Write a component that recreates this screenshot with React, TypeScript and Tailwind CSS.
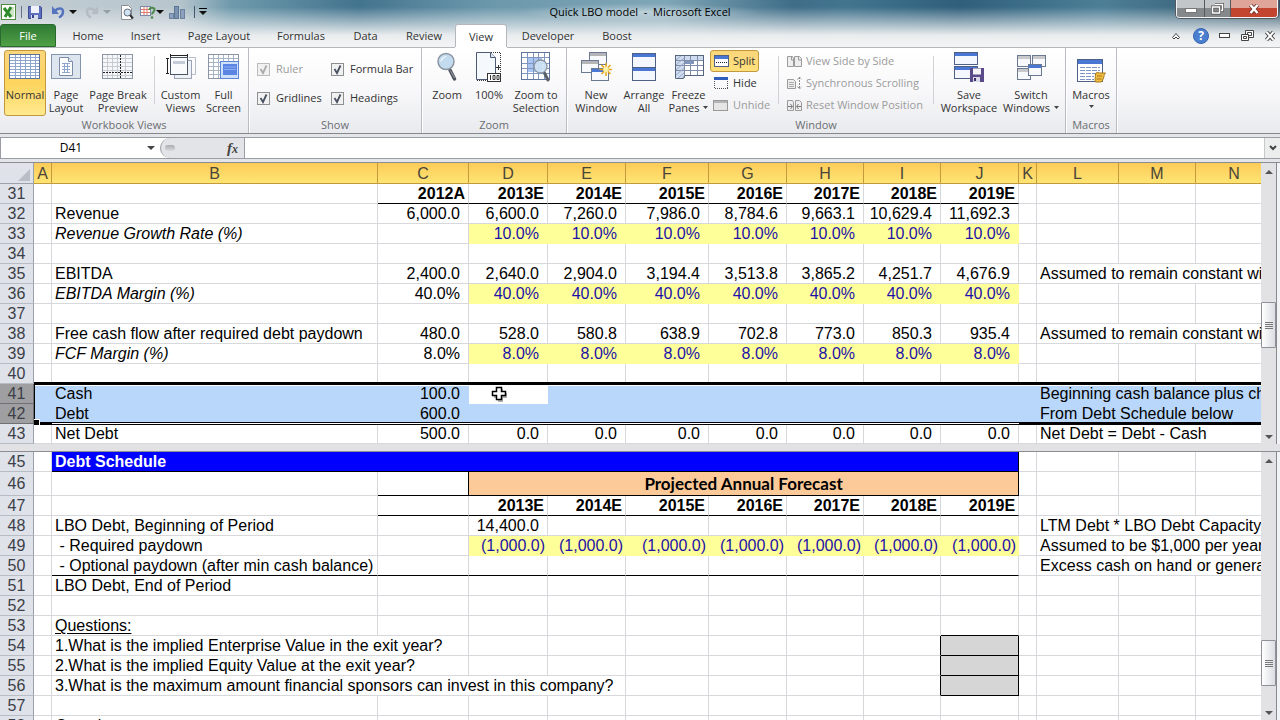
import type { ReactNode } from "react";
import { clsx } from "clsx";

/* ---------- icons ---------- */

const blue = "#4a76d4";
const slate = "#6b7891";

function Svg({ w = 32, h = 32, children }: { w?: number; h?: number; children: ReactNode }) {
  return (
    <svg width={w} height={h} viewBox={`0 0 ${w} ${h}`} fill="none" aria-hidden="true" className="shrink-0">
      {children}
    </svg>
  );
}

const NormalIcon = () => (
  <Svg>
    <rect x="0.5" y="3.5" width="30" height="24" fill="#fff" stroke="#5d7296" />
    <path d="M1 6.5h29M1 9.5h29M1 12.5h29M1 15.5h29M1 18.5h29M1 21.5h29M1 24.5h29M6.5 4v23M11.5 4v23M16.5 4v23M21.5 4v23M26.5 4v23" stroke="#8fa6cc" />
    <rect x="0.5" y="3.5" width="30" height="24" stroke="#5d7296" />
  </Svg>
);
const PageLayoutIcon = () => (
  <Svg>
    <rect x="1.5" y="3.5" width="29" height="24" fill="#dde5ef" stroke="#8494ae" />
    <path d="M9.5 6.500h9l4 4v14h-13z" fill="#fff" stroke="#7d8ca6" />
    <path d="M18.5 6.500v4h4" fill="#e4ecf7" stroke="#7d8ca6" />
    <path d="M12 12.500h8M12 15.500h8M12 18.500h8M12 21.500h8M14.500 12v10M17.500 12v10" stroke="#8fa6cc" />
  </Svg>
);
const PageBreakIcon = () => (
  <Svg>
    <rect x="0.500" y="3.500" width="30" height="24" fill="#f6f7f9" stroke="#8c95a5" />
    <path d="M1 7.500h29M1 11.500h29M1 15.500h29M1 19.500h29M1 24.500h29M5.500 4v23M10.500 4v23M15.500 4v23M23.500 4v23" stroke="#c5cad3" />
    <path d="M18.500 4v23M1 21.500h29" stroke="#222" strokeDasharray="2 1" />
  </Svg>
);
const CustomViewsIcon = () => (
  <Svg>
    <rect x="9.500" y="9.500" width="17" height="18" fill="#eef1f6" stroke="#9aa4b5" />
    <path d="M24 6.500h6.500v17H27" stroke="#b4bcc9" />
    <rect x="5.500" y="6.500" width="17" height="17" fill="#f9fafc" stroke="#4a5568" />
    <rect x="8" y="10" width="12" height="3" fill="#c3cbd9" />
    <path d="M5 4.500h18M5.500 3v3M22.500 3v3M2.500 7v16M1 7.500h3M1 22.500h3" stroke="#222" />
  </Svg>
);
const FullScreenIcon = () => (
  <Svg>
    <rect x="0.500" y="3.500" width="30" height="24" fill="#fff" stroke="#8c95a5" />
    <path d="M1 7.500h29M1 11.500h29M1 15.500h29M1 19.500h29M1 23.500h29M5.500 4v23M10.500 4v23M15.500 4v23M20.500 4v23M25.500 4v23" stroke="#a9b3c5" />
    <rect x="12.500" y="10.500" width="18" height="17" fill="#cfe0fa" stroke="#5d86d6" />
    <rect x="15" y="13" width="14" height="11" fill="#5b85e2" />
    <path d="M16 16h12M16 18.500h12" stroke="#8fb0f3" />
  </Svg>
);
const MagnifierIcon = () => (
  <Svg>
    <path d="M19 19l4.500 9" stroke="#4f545d" strokeWidth="3.500" strokeLinecap="round" />
    <path d="M19.500 19.500l4 7.500" stroke="#9aa0aa" strokeWidth="1" />
    <circle cx="15" cy="10.500" r="8" fill="#c3dbee" stroke="#8b95a1" strokeWidth="1.500" />
    <path d="M9.500 11.500a6 6 0 0 1 7-6.500c-3 1-5 3-7 6.500z" fill="#f3faff" />
  </Svg>
);
const HundredIcon = () => (
  <Svg>
    <path d="M18 1.500h9.500v28H4" stroke="#333" strokeDasharray="1 1" />
    <path d="M3.500 1.500h14l5 5v22h-19z" fill="#f5f8fd" stroke="#4e5b75" />
    <path d="M17.500 1.500v5h5" fill="#dfe7f3" stroke="#4e5b75" />
    <path d="M25.500 14v5M23 16.500h5" stroke="#333" />
    <rect x="14.500" y="22.500" width="13" height="8" fill="#fff" stroke="#333" />
    <path d="M17.500 24v5M20 24.500h2v4h-2zM24 24.500h2v4h-2z" stroke="#333" />
  </Svg>
);
const ZoomSelectionIcon = () => (
  <Svg>
    <rect x="1.500" y="1.500" width="28" height="27" fill="#fff" stroke="#62759a" />
    <rect x="8" y="7" width="14" height="14" fill="#a9c6f3" />
    <path d="M2 6.500h27M2 12.500h27M2 17.500h27M2 22.500h27M7.500 2v26M13.500 2v26M18.500 2v26M24.500 2v26" stroke="#7f96c0" />
    <path d="M24.500 22l3.500 7" stroke="#5b5f68" strokeWidth="3" strokeLinecap="round" />
    <circle cx="20.500" cy="15.500" r="6.500" fill="#cfe3f4" fillOpacity=".9" stroke="#8b95a1" strokeWidth="1.300" />
  </Svg>
);

function MiniWindow({ x, y, w, h, bar = "#b5b5b8" }: { x: number; y: number; w: number; h: number; bar?: string }) {
  return (
    <g>
      <rect x={x + 0.5} y={y + 0.5} width={w - 1} height={h - 1} fill="#f7f9fc" stroke={slate} />
      <rect x={x + 1} y={y + 1} width={w - 2} height="3" fill={bar} />
    </g>
  );
}

const NewWindowIcon = () => (
  <Svg>
    <MiniWindow x={9} y={1} w={18} h={13} />
    <MiniWindow x={1} y={9} w={18} h={13} />
    <MiniWindow x={11} y={17} w={18} h={13} bar={blue} />
    <path d="M26 12v13M19.500 18.500h13M21.500 14l9 9M30.500 14l-9 9" stroke="#e8a512" strokeWidth="1.500" />
    <circle cx="26" cy="18.500" r="2.800" fill="#fff3a8" />
  </Svg>
);
const ArrangeIcon = () => (
  <Svg>
    <rect x="4.500" y="2.500" width="23" height="14" fill="#f4f8fe" stroke="#4f6087" />
    <rect x="5" y="3" width="22" height="3" fill={blue} />
    <rect x="4.500" y="16.500" width="23" height="13" fill="#f4f8fe" stroke="#4f6087" />
    <rect x="5" y="17" width="22" height="3" fill={blue} />
  </Svg>
);
const FreezeIcon = () => (
  <Svg>
    <rect x="2.500" y="4.500" width="28" height="20" fill="#fff" stroke="#56657f" />
    <path d="M3 5h27v4H11v18H3z" fill="#cfdcef" />
    <path d="M3 9.500h27M3 14.500h27M3 19.500h27M11.500 5v22M17.500 5v19M24.500 5v19" stroke="#7f8da8" />
    <path d="M2.500 4.500v23h8l1-3" stroke="#56657f" />
    <path d="M3 9l5-4M3 14l8-7M3 19l8-7M3 24l8-7M5 27l6-5" stroke="#9aaac6" />
    <rect x="12" y="10" width="9" height="3" fill="#8296bd" />
  </Svg>
);
const SplitIcon = () => (
  <Svg w={16} h={16}>
    <rect x="1.500" y="2.500" width="14" height="11" fill="#fff" stroke="#4f6087" />
    <rect x="2" y="3" width="13" height="3" fill={blue} />
    <path d="M3 9.500h11" stroke="#222" strokeDasharray="1 1" />
  </Svg>
);
const HideIcon = () => (
  <Svg w={16} h={16}>
    <rect x="1" y="2" width="14" height="3" fill="#2f5dbd" />
    <path d="M1.500 6v8M14.500 6v8M2 13.500h13" stroke="#555" strokeDasharray="1 1" />
  </Svg>
);
const UnhideIcon = () => (
  <Svg w={16} h={16}>
    <rect x="0.500" y="3.500" width="14" height="10" fill="#e6e6e6" stroke="#999" />
    <rect x="1" y="4" width="13" height="2" fill="#b5b5b5" />
  </Svg>
);
const SideIcon = () => (
  <Svg w={16} h={16}>
    <path d="M1.500 3.500h5l1 2v8h-6zM8.500 3.500h5l2 2v8h-7z" fill="#eee" stroke="#9a9a9a" />
    <path d="M5.500 4v3h2M12.500 4v3h3" stroke="#9a9a9a" />
  </Svg>
);
const SyncIcon = () => (
  <Svg w={16} h={16}>
    <path d="M1.500 4.500h6l2 2v7h-8z" fill="#eee" stroke="#9a9a9a" />
    <path d="M3 7.500h5M3 9.500h5M3 11.500h5" stroke="#aaa" />
    <path d="M13.500 2v12M11.500 4.500l2-2.500 2 2.500M11.500 11.500l2 2.500 2-2.500" stroke="#8a8a8a" strokeDasharray="2 1" />
  </Svg>
);
const ResetIcon = () => (
  <Svg w={16} h={16}>
    <path d="M1.500 3.500h5l1 2v8h-6zM9.500 3.500h4l2 2v8h-6z" fill="#eee" stroke="#9a9a9a" />
    <path d="M2 9.500h4M4.500 7l2 2.500-2 2.500M15 9.500h-4M12.500 7l-2 2.500 2 2.500" stroke="#7a7a7a" />
  </Svg>
);
const SaveWorkspaceIcon = () => (
  <Svg>
    <rect x="1.500" y="1.500" width="23" height="12" fill="#f4f8fe" stroke="#4f6087" />
    <rect x="2" y="2" width="22" height="3" fill={blue} />
    <rect x="1.500" y="15.500" width="23" height="12" fill="#f4f8fe" stroke="#4f6087" />
    <rect x="2" y="16" width="22" height="3" fill={blue} />
    <rect x="17" y="17" width="14" height="14" fill="#5b4a8a" />
    <rect x="20" y="17.500" width="8" height="6" fill="#f3f3f8" />
    <rect x="20" y="26" width="7" height="5" fill="#d9d8e6" />
    <rect x="21" y="27" width="2" height="3" fill="#3d2f66" />
  </Svg>
);
const SwitchIcon = () => (
  <Svg>
    <MiniWindow x={2} y={4} w={14} h={12} bar="#c9c9cc" />
    <MiniWindow x={17} y={4} w={14} h={12} bar="#c9c9cc" />
    <MiniWindow x={2} y={17} w={14} h={12} bar="#c9c9cc" />
    <MiniWindow x={13} y={13} w={14} h={12} bar={blue} />
  </Svg>
);
const MacrosIcon = () => (
  <Svg>
    <rect x="2.500" y="8.500" width="25" height="22" fill="#fff" stroke="#4f6087" />
    <rect x="3" y="9" width="24" height="4" fill={blue} />
    <path d="M5 16.500h20M5 19.500h20M5 22.500h16M5 25.500h14M5 28.500h14" stroke="#7f95c4" strokeDasharray="5 1" />
    <path d="M20.500 23c0-1 2-2 4-1h6c-2 2-1 3-2 5s-1 4-3 4h-5c-1-2 0-4 0-8z" fill="#f0bd45" stroke="#a87712" />
    <path d="M22 25h5M21.500 28h5" stroke="#a87712" />
  </Svg>
);

const ExcelIcon = () => (
  <Svg w={16} h={16}>
    <rect x="1.500" y="0.500" width="14" height="15" fill="#fff" stroke="#4f8a3e" />
    <rect x="10" y="3" width="4" height="10" fill="#cfe6c6" />
    <path d="M4 4l7 9M11 3L5 13" stroke="#2f8a2b" strokeWidth="3" />
  </Svg>
);
const FloppyIcon = () => (
  <Svg w={16} h={16}>
    <path d="M1.500 2.500h12l1 1v11h-13z" fill="#5f6fc0" stroke="#3c4a8f" />
    <rect x="4" y="2" width="8" height="7" fill="#f0f3fb" />
    <rect x="4" y="11" width="7" height="4" fill="#d8dcec" />
    <rect x="5" y="11" width="2" height="3" fill="#39458a" />
  </Svg>
);
const UndoIcon = ({ color }: { color: string }) => (
  <Svg w={14} h={16}>
    <path d="M4 7c2-3 8-4 8 0.500 0 3-2 5-4 6" stroke={color} strokeWidth="2.500" />
    <path d="M1 2v8h7z" fill={color} />
  </Svg>
);
const PreviewIcon = () => (
  <Svg w={16} h={16}>
    <path d="M2.500 1.500h7l3 3v11h-10z" fill="#fff" stroke="#8b8f96" />
    <circle cx="8.500" cy="8.500" r="3.500" fill="#cfe3f4" stroke="#666d78" />
    <path d="M11 11l3 3.500" stroke="#333" strokeWidth="2" />
  </Svg>
);
const HelpTableIcon = () => (
  <Svg w={16} h={16}>
    <rect x="0.500" y="2.500" width="10" height="9" fill="#fff" stroke="#7c8aa6" />
    <path d="M1 5.500h9M1 8.500h9M4 3v8M7 3v8" stroke="#e07a6c" />
    <path d="M9.500 6c0-3 5-3 5 0 0 2-2.500 2-2.500 4.500" stroke="#4b8a4b" strokeWidth="2" />
    <circle cx="12" cy="13.500" r="1.300" fill="#4b8a4b" />
  </Svg>
);
const ChartIcon = () => (
  <Svg w={18} h={16}>
    <rect x="1.500" y="9.500" width="4" height="5" fill="#8ba0bb" stroke="#6a819f" />
    <rect x="6.500" y="2.500" width="4" height="12" fill="#7b92b0" stroke="#5d7594" />
    <rect x="12.500" y="5.500" width="4" height="9" fill="#8ba0bb" stroke="#6a819f" />
  </Svg>
);

function Caret({ color = "#333", up = false }: { color?: string; up?: boolean }) {
  return (
    <svg width="8" height="4" viewBox="0 0 8 4" aria-hidden="true" className="shrink-0">
      <path d={up ? "M0 4h8L4 0z" : "M0 0h8L4 4z"} fill={color} />
    </svg>
  );
}

/* ---------- title bar and tabs ---------- */

function TitleBar() {
  return (
    <header className="relative flex h-[22px] items-center justify-between">
      <div className="flex items-center gap-1 pt-px">
        <ExcelIcon />
        <span className="mx-px h-3 w-px bg-slate-500" />
        <button aria-label="Save"><FloppyIcon /></button>
        <button aria-label="Undo" className="ml-1 flex items-center gap-1"><UndoIcon color="#5573bf" /><Caret color="#111" /></button>
        <button aria-label="Redo" className="ml-1 flex items-center gap-1">
          <span className="-scale-x-100"><UndoIcon color="#b4bcc2" /></span>
          <Caret color="#949ea6" />
        </button>
        <button aria-label="Print preview" className="ml-1"><PreviewIcon /></button>
        <button aria-label="Pivot help" className="ml-px flex items-center"><HelpTableIcon /><Caret color="#111" /></button>
        <button aria-label="Chart"><ChartIcon /></button>
        <button aria-label="Customize toolbar" className="ml-1 flex h-3 flex-col items-center justify-center gap-0.5 border-l border-slate-600 pl-1">
          <span className="h-px w-2 bg-black" />
          <Caret color="#111" />
        </button>
      </div>
      <h1 className="absolute inset-x-0 top-[3px] mx-auto w-fit bg-radial from-white/40 to-transparent to-70% px-8 text-[11px] leading-[18px] whitespace-pre text-black">Quick LBO model  -  Microsoft Excel</h1>
      <div className="mr-0.5 flex h-[18px] self-start overflow-hidden rounded-b border border-t-0 border-slate-100 shadow-[0_0_0_1px_#55585c]">
        <button aria-label="Minimize" className="flex w-7 items-end justify-center border-r border-[#55585c] bg-linear-to-b from-[#c3c6c8] from-45% to-[#85898b] to-50% pb-1">
          <svg width="12" height="5" aria-hidden="true"><rect x="0.500" y="0.500" width="11" height="4" fill="#fff" stroke="#777" /></svg>
        </button>
        <button aria-label="Restore" className="flex w-[26px] items-center justify-center border-r border-[#55585c] bg-linear-to-b from-[#c3c6c8] from-45% to-[#85898b] to-50%">
          <svg width="13" height="12" viewBox="0 0 13 12" fill="none" aria-hidden="true">
            <path d="M4 1.500h7.500v6H10M1.500 4h7v6h-7z" stroke="#555" strokeWidth="3" />
            <path d="M4 1.500h7.500v6H10M1.500 4h7v6h-7z" stroke="#fff" strokeWidth="1.500" />
          </svg>
        </button>
        <button aria-label="Close" className="flex w-[46px] items-center justify-center bg-linear-to-b from-[#e0a599] from-45% to-[#c4452f] to-50%">
          <svg width="12" height="10" viewBox="0 0 12 10" aria-hidden="true">
            <path d="M2.500 1l7 8M9.500 1l-7 8" stroke="#6b2f28" strokeWidth="4" />
            <path d="M2.500 1l7 8M9.500 1l-7 8" stroke="#fff" strokeWidth="2.500" />
          </svg>
        </button>
      </div>
    </header>
  );
}

const tabs: { label: string; width: string }[] = [
  { label: "Home", width: "w-[58px]" },
  { label: "Insert", width: "w-[57px]" },
  { label: "Page Layout", width: "w-[90px]" },
  { label: "Formulas", width: "w-[74px]" },
  { label: "Data", width: "w-[55px]" },
  { label: "Review", width: "w-[62px]" },
  { label: "View", width: "w-[52px]" },
  { label: "Developer", width: "w-[82px]" },
  { label: "Boost", width: "w-[56px]" },
];

function TabBar() {
  return (
    <nav className="flex h-[25px] items-end justify-between">
      <div className="flex h-[23px]">
        <button className="mr-[3px] w-[56px] rounded-t-[3px] border border-[#2a6a2e] bg-linear-to-b from-[#2f7a35] to-[#4fa045] pt-0.5 text-white">File</button>
        {tabs.map((t) => (
          <button
            key={t.label}
            className={clsx(
              t.width,
              "pt-0.5",
              t.label === "View" ? "relative rounded-t-[3px] border border-b-0 border-[#b4b8bd] bg-white shadow-[0_1px_0_#fff]" : "border border-transparent",
            )}
          >
            {t.label}
          </button>
        ))}
      </div>
      <div className="flex h-[23px] items-center gap-2 pr-[3px]">
        <button aria-label="Minimize ribbon" className="mr-1">
          <svg width="10" height="8" viewBox="0 0 10 8" aria-hidden="true"><path d="M1.500 5.500L5 1.500l3.500 4-1.500 1.500-2-2-2 2z" fill="#fff" stroke="#444" /></svg>
        </button>
        <button aria-label="Help" className="flex size-4 items-center justify-center rounded-full border border-[#3763ae] bg-[#4b7fd0] text-[12px] leading-none font-bold text-white">?</button>
        <button aria-label="Minimize workbook" className="ml-0.5">
          <svg width="12" height="6" aria-hidden="true"><rect x="0.500" y="0.500" width="10" height="4" fill="#fff" stroke="#444" /></svg>
        </button>
        <button aria-label="Restore workbook" className="ml-0.5">
          <svg width="13" height="12" viewBox="0 0 13 12" fill="#fff" stroke="#444" aria-hidden="true">
            <path d="M4.500 0.500h8v7h-8z" /><path d="M6.500 2.500h4v3h-4z" /><path d="M0.500 4.500h7v6h-7z" /><path d="M2.500 6.500h3v2h-3z" />
          </svg>
        </button>
        <button aria-label="Close workbook" className="ml-0.5">
          <svg width="13" height="10" viewBox="0 0 13 10" aria-hidden="true">
            <path d="M2.500 1l7 8M9.500 1l-7 8" stroke="#444" strokeWidth="4" /><path d="M2.500 1l7 8M9.500 1l-7 8" stroke="#fff" strokeWidth="2" />
          </svg>
        </button>
      </div>
    </nav>
  );
}

/* ---------- ribbon ---------- */

interface BigButtonProps {
  icon: ReactNode;
  lines: string[];
  width: string;
  active?: boolean;
  caret?: "inline" | "below";
}

function BigButton({ icon, lines, width, active, caret }: BigButtonProps) {
  return (
    <button
      className={clsx(
        width,
        "flex h-[66px] shrink-0 flex-col items-center rounded-[3px] border leading-[13px] whitespace-nowrap",
        active ? "border-[#c29a3d] bg-linear-to-b from-[#fbd67c] via-[#fdd45c] to-[#ffe98e]" : "border-transparent",
      )}
    >
      {icon}
      <span className="mt-[5px]">{lines[0]}</span>
      {lines[1] && (
        <span className="flex items-center gap-1">
          {lines[1]}
          {caret === "inline" && <SmallCaret />}
        </span>
      )}
      {caret === "below" && <span className="mt-1"><SmallCaret /></span>}
    </button>
  );
}

function SmallCaret() {
  return <svg width="5" height="3" viewBox="0 0 5 3" aria-hidden="true"><path d="M0 0h5L2.500 3z" fill="#444" /></svg>;
}

function Group({ title, width, children }: { title: string; width: string; children: ReactNode }) {
  return (
    <section aria-label={title} className={clsx(width, "flex h-full shrink-0 flex-col border-r border-[#b9bcc2] pt-[2px] shadow-[1px_0_0_#fff]")}>
      <div className="flex flex-1 items-start">{children}</div>
      <h2 className="text-center leading-4 text-[#6a6d72]">{title}</h2>
    </section>
  );
}

function SmallButton({ icon, label, active, disabled }: { icon: ReactNode; label: string; active?: boolean; disabled?: boolean }) {
  return (
    <button
      disabled={disabled}
      className={clsx(
        "flex h-[22px] items-center gap-1 rounded-[3px] border pr-[3px] pl-0.5 whitespace-nowrap",
        active ? "border-[#c29a3d] bg-linear-to-b from-[#fbd67c] to-[#ffe07a]" : "border-transparent",
        disabled && "text-[#9b9b9b]",
      )}
    >
      {icon}
      {label}
    </button>
  );
}

function Tick({ label, disabled }: { label: string; disabled?: boolean }) {
  return (
    <label className={clsx("flex h-[29px] items-center gap-[6px] whitespace-nowrap", disabled && "text-[#9b9b9b]")}>
      <span className="relative flex">
        <input type="checkbox" defaultChecked disabled={disabled} className="peer size-[13px] appearance-none border border-[#8e8f8f] bg-[#f1f1f1] disabled:border-[#bbb]" />
        <svg width="13" height="13" viewBox="0 0 13 13" fill="none" aria-hidden="true" className="pointer-events-none absolute inset-0 text-[#4a5160] peer-disabled:text-[#aaa]">
          <path d="M3.500 6l2.500 4 3.500-7.500" stroke="currentColor" strokeWidth="1.800" />
        </svg>
      </span>
      {label}
    </label>
  );
}

const Divider = ({ margin }: { margin: string }) => <span className={clsx(margin, "mt-1.5 h-12 w-px shrink-0 bg-[#d0d2d6]")} />;

function Ribbon() {
  return (
    <div className="flex h-[87px] overflow-hidden border-t border-b border-t-[#b4b8bd] border-b-[#85888d] bg-linear-to-b from-white via-[#f8f8fa] to-[#e9eaed]">
      <Group title="Workbook Views" width="w-[249px]">
        <BigButton icon={<NormalIcon />} lines={["Normal"]} width="ml-1 w-[42px]" active />
        <BigButton icon={<PageLayoutIcon />} lines={["Page", "Layout"]} width="w-[40px]" />
        <BigButton icon={<PageBreakIcon />} lines={["Page Break", "Preview"]} width="w-[64px]" />
        <Divider margin="mx-1" />
        <BigButton icon={<CustomViewsIcon />} lines={["Custom", "Views"]} width="w-[43px]" />
        <BigButton icon={<FullScreenIcon />} lines={["Full", "Screen"]} width="w-[43px]" />
      </Group>
      <Group title="Show" width="w-[173px]">
        <div className="mt-[5px] ml-2 grid grid-cols-[74px_auto]">
          <Tick label="Ruler" disabled />
          <Tick label="Formula Bar" />
          <Tick label="Gridlines" />
          <Tick label="Headings" />
        </div>
      </Group>
      <Group title="Zoom" width="w-[145px]">
        <BigButton icon={<MagnifierIcon />} lines={["Zoom"]} width="ml-1 w-[42px]" />
        <BigButton icon={<HundredIcon />} lines={["100%"]} width="w-[42px]" />
        <BigButton icon={<ZoomSelectionIcon />} lines={["Zoom to", "Selection"]} width="w-[52px]" />
      </Group>
      <Group title="Window" width="w-[499px]">
        <BigButton icon={<NewWindowIcon />} lines={["New", "Window"]} width="ml-1 w-[50px]" />
        <BigButton icon={<ArrangeIcon />} lines={["Arrange", "All"]} width="w-[46px]" />
        <BigButton icon={<FreezeIcon />} lines={["Freeze", "Panes"]} width="w-[43px]" caret="inline" />
        <div className="flex w-[68px] flex-col items-start">
          <SmallButton icon={<SplitIcon />} label="Split" active />
          <SmallButton icon={<HideIcon />} label="Hide" />
          <SmallButton icon={<UnhideIcon />} label="Unhide" disabled />
        </div>
        <Divider margin="mr-1" />
        <div className="flex w-[150px] flex-col items-start">
          <SmallButton icon={<SideIcon />} label="View Side by Side" disabled />
          <SmallButton icon={<SyncIcon />} label="Synchronous Scrolling" disabled />
          <SmallButton icon={<ResetIcon />} label="Reset Window Position" disabled />
        </div>
        <Divider margin="mr-1" />
        <BigButton icon={<SaveWorkspaceIcon />} lines={["Save", "Workspace"]} width="w-[62px]" />
        <BigButton icon={<SwitchIcon />} lines={["Switch", "Windows"]} width="w-[62px]" caret="inline" />
      </Group>
      <Group title="Macros" width="w-[51px]">
        <BigButton icon={<MacrosIcon />} lines={["Macros"]} width="w-[50px]" caret="below" />
      </Group>
    </div>
  );
}

function FormulaBar() {
  return (
    <div className="border-b border-[#8b8d92] bg-[#e4e5e8] pt-[3px] pb-[3px]">
      <div className="flex h-[22px] border-t border-b border-[#9a9da3] bg-white">
        <div className="flex w-[160px] items-center border-l border-[#9a9da3] pr-[5px]">
          <input aria-label="Name box" defaultValue="D41" className="w-full min-w-0 bg-transparent pr-1.5 text-center font-['Open_Sans',sans-serif] text-[12px] text-black" />
          <button aria-label="Name list"><Caret color="#444" /></button>
        </div>
        <div className="flex w-[85px] items-center justify-between rounded-l-full border-r border-l border-[#9a9da3] bg-[#e3e4e7] pr-1.5 pl-1">
          <span className="h-1.5 w-2.5 rounded-full bg-linear-to-b from-[#a9abb0] to-[#dcdde0]" />
          <button aria-label="Insert function" className="font-['Liberation_Serif',serif] text-[15px] leading-none font-bold text-[#444] italic">
            f<span className="text-[12px]">x</span>
          </button>
        </div>
        <input aria-label="Formula" className="min-w-0 flex-1 bg-white" />
        <button aria-label="Expand formula bar" className="flex w-4 items-center justify-center border-l border-[#c5c7cb] bg-[#eceded]">
          <svg width="8" height="6" viewBox="0 0 8 6" fill="none" aria-hidden="true"><path d="M1 1l3 3 3-3" stroke="#444" strokeWidth="2" /></svg>
        </button>
      </div>
    </div>
  );
}

/* ---------- worksheet ---------- */

interface Cell {
  text?: string;
  span?: number;
  cls?: string;
}
interface Row {
  n: number;
  cells: Record<string, Cell>;
  height?: string;
  selected?: boolean;
}

const letters = ["A", "B", "C", "D", "E", "F", "G", "H", "I", "J", "K", "L", "M", "N"];
const years = ["D", "E", "F", "G", "H", "I", "J"];
const num = "text-right pr-2";
const heading = "text-right pr-[3px] font-bold border-b-black";
const input = "text-right pr-2 bg-[#ffff99] border-[#ffff99] text-[#1d12a8]";
const outflow = "text-right pr-0.5 bg-[#ffff99] border-[#ffff99] text-[#1d12a8]";
const answer = "bg-[#d6d6d6] border-black";

function across(values: string[], cls: string, from = "D"): Record<string, Cell> {
  const start = letters.indexOf(from);
  return Object.fromEntries(values.map((text, i) => [letters[start + i], { text, cls }]));
}
const label = (text: string, cls = "", span = 1): Cell => ({ text, cls, span });
const note = (text: string): Cell => ({ text, span: 3 });
const yearNames = ["2013E", "2014E", "2015E", "2016E", "2017E", "2018E", "2019E"];
const repeat = (s: string) => years.map(() => s);

const topRows: Row[] = [
  { n: 31, cells: across(["2012A", ...yearNames], heading, "C") },
  { n: 32, cells: { B: label("Revenue"), ...across(["6,000.0", "6,600.0", "7,260.0", "7,986.0", "8,784.6", "9,663.1", "10,629.4", "11,692.3"], num, "C") } },
  { n: 33, cells: { B: label("Revenue Growth Rate (%)", "italic"), ...across(repeat("10.0%"), input) } },
  { n: 34, cells: {} },
  { n: 35, cells: { B: label("EBITDA"), ...across(["2,400.0", "2,640.0", "2,904.0", "3,194.4", "3,513.8", "3,865.2", "4,251.7", "4,676.9"], num, "C"), L: note("Assumed to remain constant with") } },
  { n: 36, cells: { B: label("EBITDA Margin (%)", "italic"), C: { text: "40.0%", cls: num }, ...across(repeat("40.0%"), input) } },
  { n: 37, cells: {} },
  { n: 38, cells: { B: label("Free cash flow after required debt paydown"), ...across(["480.0", "528.0", "580.8", "638.9", "702.8", "773.0", "850.3", "935.4"], num, "C"), L: note("Assumed to remain constant with") } },
  { n: 39, cells: { B: label("FCF Margin (%)", "italic"), C: { text: "8.0%", cls: num }, ...across(repeat("8.0%"), input) } },
  { n: 40, cells: {} },
  { n: 41, selected: true, cells: { B: label("Cash"), C: { text: "100.0", cls: num }, D: { cls: "bg-white" }, L: note("Beginning cash balance plus change") } },
  { n: 42, selected: true, cells: { B: label("Debt"), C: { text: "600.0", cls: num }, L: note("From Debt Schedule below") } },
  { n: 43, cells: { B: label("Net Debt"), C: { text: "500.0", cls: num }, ...across(repeat("0.0"), num), L: note("Net Debt = Debt - Cash") } },
];

const ruleB = "border-b-black";
const bottomRows: Row[] = [
  { n: 45, cells: { B: { text: "Debt Schedule", span: 9, cls: "bg-[#0000ff] font-bold text-white border-b-black border-r-black" } } },
  {
    n: 46,
    height: "h-6",
    cells: {
      C: { cls: "border-black" },
      D: { text: "Projected Annual Forecast", span: 7, cls: "bg-[#fcca99] border-black text-center font-['Lato',sans-serif] text-[17px] font-bold" },
    },
  },
  { n: 47, cells: { C: { cls: ruleB }, ...across(yearNames, heading) } },
  { n: 48, cells: { B: label("LBO Debt, Beginning of Period"), D: { text: "14,400.0", cls: num }, L: note("LTM Debt * LBO Debt Capacity") } },
  { n: 49, cells: { B: label(" - Required paydown"), ...across(repeat("(1,000.0)"), outflow), L: note("Assumed to be $1,000 per year") } },
  { n: 50, cells: { ...across(repeat(""), ruleB), B: label(" - Optional paydown (after min cash balance)", ruleB), C: { cls: ruleB }, L: note("Excess cash on hand or generated") } },
  { n: 51, cells: { B: label("LBO Debt, End of Period") } },
  { n: 52, cells: {} },
  { n: 53, cells: { B: label("Questions:", "underline underline-offset-2"), J: { cls: ruleB } } },
  { n: 54, cells: { B: label("1.What is the implied Enterprise Value in the exit year?", "", 2), I: { cls: "border-r-black" }, J: { cls: answer } } },
  { n: 55, cells: { B: label("2.What is the implied Equity Value at the exit year?", "", 2), I: { cls: "border-r-black" }, J: { cls: answer } } },
  { n: 56, cells: { B: label("3.What is the maximum amount financial sponsors can invest in this company?", "", 4), I: { cls: "border-r-black" }, J: { cls: answer } } },
  { n: 57, cells: {} },
  { n: 58, cells: { B: label("Questions:") } },
];

function Columns() {
  return (
    <colgroup>
      <col className="w-[34px]" />
      <col className="w-[18px]" />
      <col className="w-[326px]" />
      <col className="w-[91px]" />
      <col className="w-[79px]" />
      <col className="w-[78px]" />
      <col className="w-[83px]" />
      <col className="w-[78px]" />
      <col className="w-[77px]" />
      <col className="w-[77px]" />
      <col className="w-[78px]" />
      <col className="w-[18px]" />
      <col className="w-[82px]" />
      <col className="w-[77px]" />
      <col />
    </colgroup>
  );
}

function SheetRow({ row }: { row: Row }) {
  const out: ReactNode[] = [];
  for (let i = 0; i < letters.length; i++) {
    const cell = row.cells[letters[i]] ?? {};
    out.push(
      <td
        key={letters[i]}
        colSpan={cell.span ?? 1}
        className={clsx(
          "border-r border-b p-0 whitespace-pre",
          !cell.cls?.includes("text-right") && !cell.cls?.includes("text-center") && "pl-[3px]",
          row.selected ? (cell.cls?.includes("bg-white") ? "border-white" : "border-[#b9d7fa] bg-[#b9d7fa]") : "border-[#d6d8dc]",
          cell.cls,
        )}
      >
        {cell.text}
      </td>,
    );
    i += (cell.span ?? 1) - 1;
  }
  return (
    <tr className={row.height ?? "h-5"}>
      <th
        scope="row"
        className={clsx(
          "border-r border-b p-0 text-center font-normal text-[#3c4048]",
          row.selected ? "border-[#6f7073] bg-[#9f9fa1]" : "border-r-[#9ba1ab] border-b-[#b8bcc4] bg-[#dfe2e8]",
        )}
      >
        {row.n}
      </th>
      {out}
    </tr>
  );
}

/* The last column runs a little way under the scroll bar. */
const tableClass = "w-[calc(100%+12px)] table-fixed border-separate border-spacing-0 bg-white text-[16px] leading-[19px] text-black";

function ScrollBar({ thumb, name }: { thumb: string; name: string }) {
  return (
    <div aria-label={name} className="flex w-[19px] shrink-0 border-r-[3px] border-[#f2f3f5]">
      <div className="flex w-4 flex-col items-stretch border-r border-[#85888d] bg-[#e2e2e5]">
        <button aria-label="Scroll up" className="flex h-[18px] shrink-0 items-center justify-center"><Caret up color="#555" /></button>
        <div className="flex min-h-0 flex-1 flex-col">
          <div className={clsx(thumb, "flex h-[46px] shrink-0 flex-col items-center justify-center gap-px rounded-[1px] border border-[#8e9298] bg-linear-to-r from-white to-[#dcdde2]")}>
            <span className="h-px w-2 bg-[#777]" />
            <span className="h-px w-2 bg-[#777]" />
            <span className="h-px w-2 bg-[#777]" />
            <span className="h-px w-2 bg-[#777]" />
          </div>
        </div>
        <button aria-label="Scroll down" className="flex h-[15px] shrink-0 items-center justify-center"><Caret color="#555" /></button>
      </div>
    </div>
  );
}

function SelectionFrame() {
  return (
    <div className="pointer-events-none absolute top-[219px] right-0 left-[34px] h-[43px] border-t-[3px] border-b-[3px] border-l border-black">
      <div className="h-px bg-white" />
      <div className="absolute -bottom-[2px] left-[17px] h-px w-[967px] bg-white" />
      <div className="absolute -bottom-[3px] -left-px size-[6px] border-t border-r border-white bg-black" />
    </div>
  );
}

function CrossCursor() {
  return (
    <svg width="18" height="18" viewBox="0 0 18 18" aria-hidden="true" className="pointer-events-none absolute top-[222px] left-[491px]">
      <path d="M7 4h5v4h4v5h-4v4H7v-4H3V8h4z" fill="#000" fillOpacity=".3" />
      <path d="M5.500 2.500h5v4h4v4h-4v4h-5v-4h-4v-4h4z" fill="#fff" stroke="#000" strokeWidth="1.500" />
    </svg>
  );
}

function Worksheet() {
  return (
    <main className="flex min-h-0 flex-1 flex-col font-['Liberation_Sans',Arial,sans-serif]">
      <div className="flex shrink-0">
        <div className="relative min-w-0 flex-1 overflow-hidden">
          <table aria-label="Upper pane" className={tableClass}>
            <Columns />
            <thead>
              <tr className="h-[21px]">
                <th aria-label="Select all" className="border-r border-b border-[#9ba1ab] bg-[#dfe2e8] p-0">
                  <svg width="12" height="12" viewBox="0 0 12 12" aria-hidden="true" className="mt-1 mr-[3px] ml-auto"><path d="M12 0v12H0z" fill="#b9bdc5" /></svg>
                </th>
                {letters.map((l) => (
                  <th key={l} scope="col" className="border-r border-b border-[#c39a3c] bg-linear-to-b from-[#fccb58] to-[#fee574] p-0 text-center font-normal text-[#4a4538]">
                    {l}
                  </th>
                ))}
              </tr>
            </thead>
            <tbody>{topRows.map((r) => <SheetRow key={r.n} row={r} />)}</tbody>
          </table>
          <SelectionFrame />
          <CrossCursor />
        </div>
        <ScrollBar name="Upper pane scroll" thumb="mt-[121px]" />
      </div>
      <div className="h-2 shrink-0 border-b border-[#8b8d92] bg-[#e2e2e5]" />
      <div className="flex min-h-0 flex-1">
        <div className="min-w-0 flex-1 overflow-hidden">
          <table aria-label="Lower pane" className={tableClass}>
            <Columns />
            <tbody>{bottomRows.map((r) => <SheetRow key={r.n} row={r} />)}</tbody>
          </table>
        </div>
        <ScrollBar name="Lower pane scroll" thumb="mt-[170px]" />
      </div>
    </main>
  );
}

export default function App() {
  return (
    <div className="flex h-screen flex-col overflow-hidden bg-white font-['Open_Sans','Noto_Sans',sans-serif] text-[11px] text-[#333]">
      <div className="bg-[linear-gradient(to_bottom,transparent_0,transparent_15%,#e9ecee_75%,#f4f4f5_100%),linear-gradient(to_right,#c3cdd3_0,#b7c5cd_14%,#6f9aac_18%,#43748e_28%,#6b97ab_38%,#7fa6b6_52%,#3f6d88_62%,#43758f_66%,#2f5f7b_75%,#4d7f97_86%,#2f5268_100%)]">
        <TitleBar />
        <TabBar />
      </div>
      <Ribbon />
      <FormulaBar />
      <Worksheet />
    </div>
  );
}
